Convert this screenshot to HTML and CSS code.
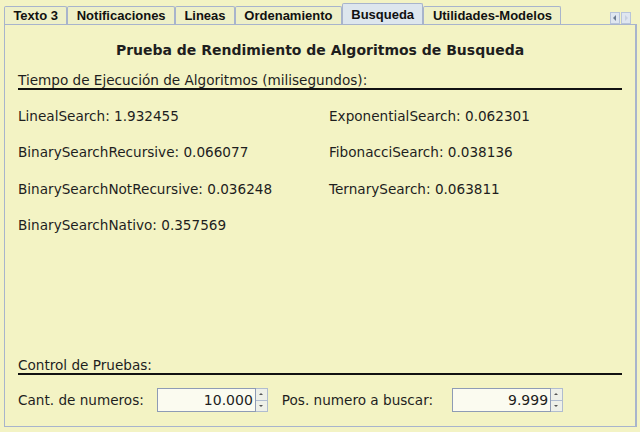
FILE: index.html
```html
<!DOCTYPE html>
<html>
<head>
<meta charset="utf-8">
<link rel="stylesheet" href="styles.css">
</head>
<body>
<div class="tabs">
  <div class="tab">Texto 3</div>
  <div class="tab">Notificaciones</div>
  <div class="tab">Lineas</div>
  <div class="tab">Ordenamiento</div>
  <div class="tab active">Busqueda</div>
  <div class="tab">Utilidades-Modelos</div>
  <div class="spacer"></div>
  <div class="scroll">
    <span class="sbtn"><svg width="8" height="8" viewBox="0 0 8 8"><path d="M5 1 L2 4 L5 7 Z" fill="#6a7a90"/></svg></span>
    <span class="sbtn"><svg width="8" height="8" viewBox="0 0 8 8"><path d="M3 1 L6 4 L3 7 Z" fill="#c8d0e0"/></svg></span>
  </div>
</div>
<div class="panel">
  <div class="title">Prueba de Rendimiento de Algoritmos de Busqueda</div>
  <div class="section first">Tiempo de Ejecución de Algoritmos (milisegundos):</div>
  <div class="results">
    <div class="res">LinealSearch: 1.932455</div>
    <div class="res">ExponentialSearch: 0.062301</div>
    <div class="res">BinarySearchRecursive: 0.066077</div>
    <div class="res">FibonacciSearch: 0.038136</div>
    <div class="res">BinarySearchNotRecursive: 0.036248</div>
    <div class="res">TernarySearch: 0.063811</div>
    <div class="res">BinarySearchNativo: 0.357569</div>
  </div>
  <div class="grow"></div>
  <div class="section">Control de Pruebas:</div>
  <div class="controls">
    <span class="lbl">Cant. de numeros:</span>
    <div class="spin"><div class="val">10.000</div><div class="arrows"><span class="up"></span><span class="down"></span></div></div>
    <span class="lbl lbl2">Pos. numero a buscar:</span>
    <div class="spin spin2"><div class="val">9.999</div><div class="arrows"><span class="up"></span><span class="down"></span></div></div>
  </div>
</div>
</body>
</html>
```
FILE: styles.css
```css
html, body {
  margin: 0;
  padding: 0;
}
body {
  width: 640px;
  height: 432px;
  background: #f3f3c4;
  font-family: "DejaVu Sans", Verdana, sans-serif;
  font-size: 13.6px;
  color: #1e1e1e;
  display: flex;
  flex-direction: column;
  overflow: hidden;
}
.tabs {
  display: flex;
  align-items: flex-end;
  height: 24px;
  padding-left: 4px;
  padding-right: 9px;
  box-sizing: border-box;
}
.tab {
  font-family: "Liberation Sans", Arial, sans-serif;
  font-weight: bold;
  font-size: 13px;
  height: 17px;
  line-height: 18px;
  padding: 0 8.4px;
  border: 1px solid #a8b4cc;
  border-bottom: none;
  border-radius: 2px 2px 0 0;
  color: #111;
  background: #eef0c8;
}
.tab.active {
  height: 20px;
  line-height: 21px;
  background: #dde6ee;
}
.spacer { flex: 1; }
.scroll {
  display: flex;
  gap: 1px;
  height: 12px;
}
.sbtn {
  width: 8px;
  height: 10px;
  border: 1px solid #b8c4da;
  background: #dfe6f0;
  display: flex;
  align-items: center;
  justify-content: center;
}
.panel {
  flex: 1;
  margin: 0 3px 5px 4px;
  border: 1px solid #a8b4cc;
  border-right: 2px solid #a8b4cc;
  display: flex;
  flex-direction: column;
  padding: 17px 13px 14px 13px;
}
.title {
  text-align: center;
  font-weight: bold;
  font-size: 14px;
  line-height: 16px;
}
.section {
  line-height: 16px;
  border-bottom: 2px solid #111;
  padding-bottom: 0;
}
.section.first {
  margin-top: 14px;
}
.results {
  display: grid;
  grid-template-columns: 311px 1fr;
  row-gap: 20.33px;
  margin-top: 18px;
}
.res {
  line-height: 16px;
}
.grow { flex: 1; }
.controls {
  display: flex;
  align-items: center;
  margin-top: 13px;
}
.lbl2 { margin-left: 14px; }
.spin {
  display: flex;
  margin-left: 13px;
  height: 24px;
}
.spin2 { margin-left: 19px; }
.val {
  width: 95px;
  border: 1px solid #8e9bb5;
  background: #fbfbf0;
  text-align: right;
  line-height: 22px;
  padding-right: 2px;
  font-size: 14px;
}
.arrows {
  width: 11px;
  border: 1px solid #b0bccf;
  border-left: none;
  display: flex;
  flex-direction: column;
  background: #eef0e8;
}
.arrows span {
  flex: 1;
  position: relative;
}
.arrows .up { border-bottom: 1px solid #b0bccf; }
.arrows .up::after, .arrows .down::after {
  content: "";
  position: absolute;
  left: 3px;
  top: 4px;
  border-left: 2px solid transparent;
  border-right: 2px solid transparent;
}
.arrows .up::after { border-bottom: 2px solid #555; }
.arrows .down::after { border-top: 2px solid #555; }
```
